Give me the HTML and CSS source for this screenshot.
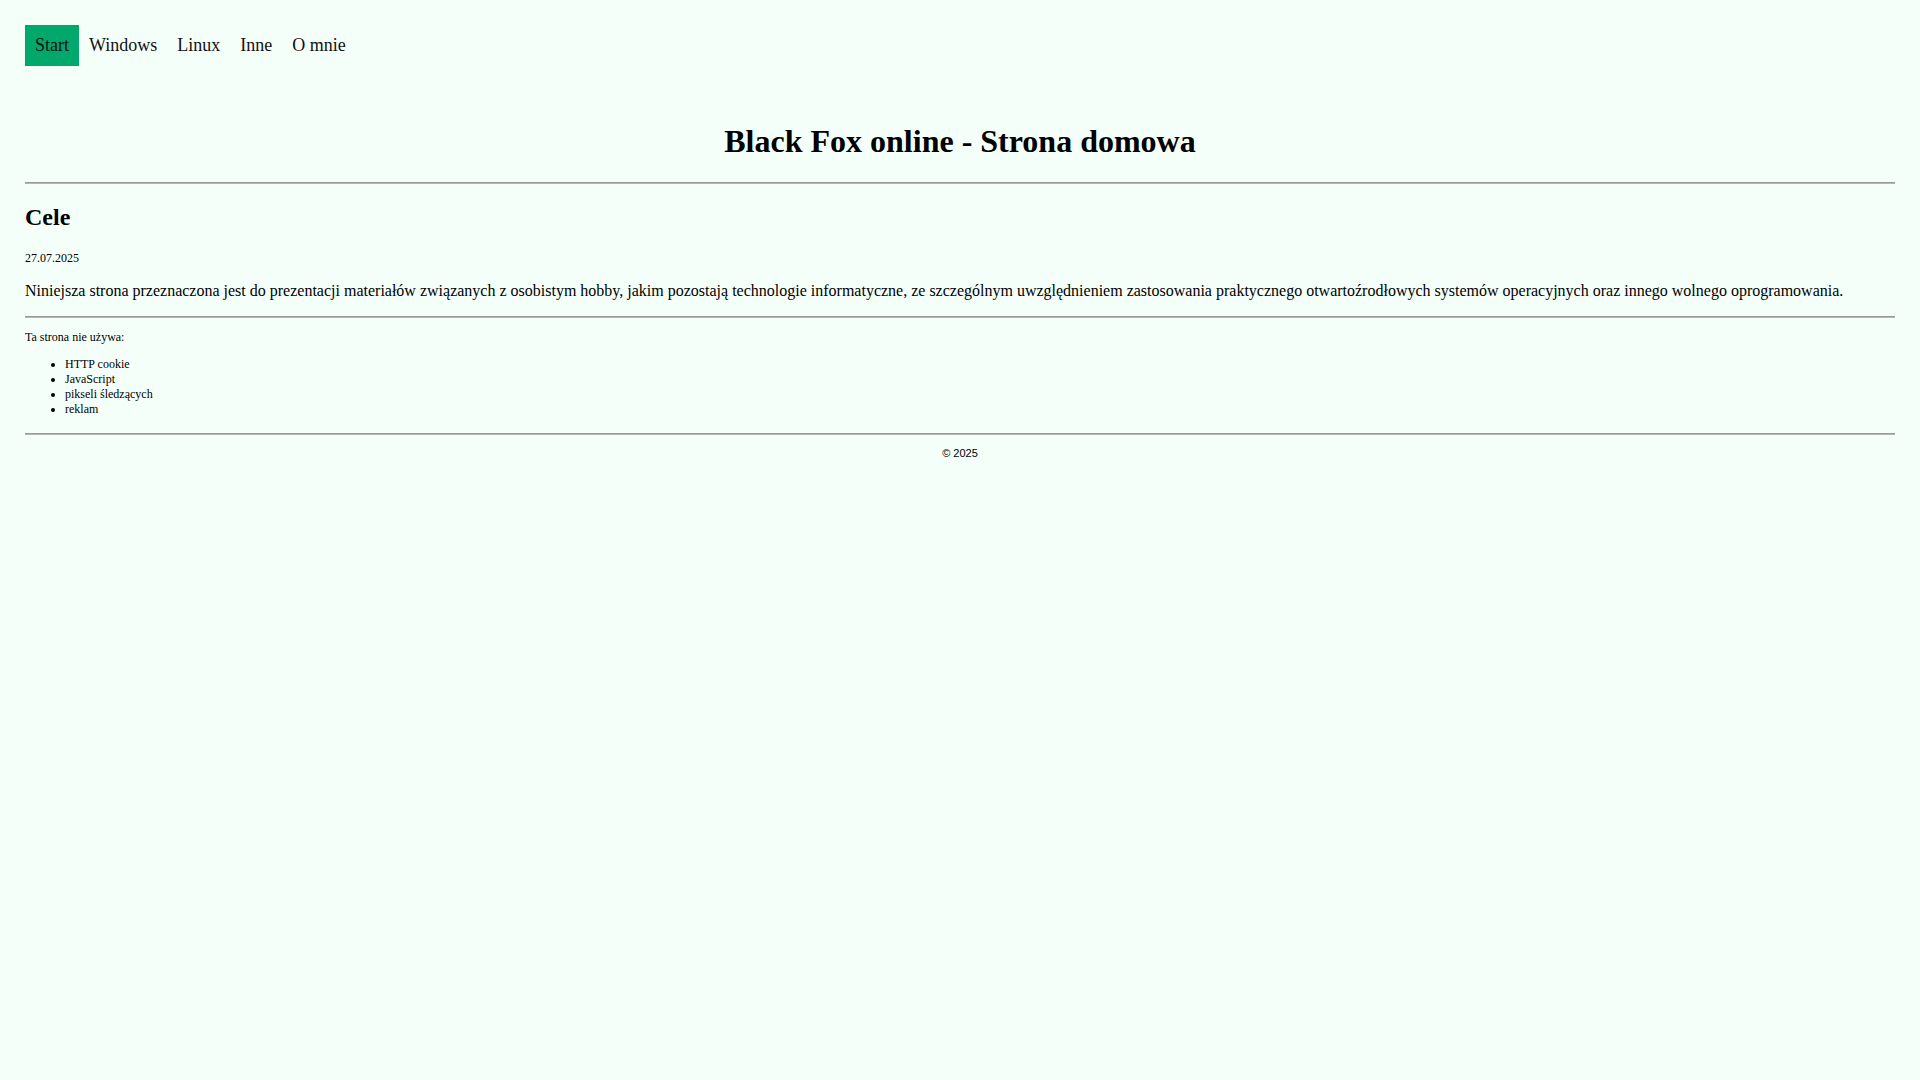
FILE: index.html
```html
<!DOCTYPE html>
<html lang="pl">
<head>
<meta charset="utf-8">
<title>Black Fox online - Strona domowa</title>
<link rel="stylesheet" href="styles.css">
</head>
<body>
<nav class="menu">
  <a class="menu-link active" href="#">Start</a>
  <a class="menu-link" href="#">Windows</a>
  <a class="menu-link" href="#">Linux</a>
  <a class="menu-link" href="#">Inne</a>
  <a class="menu-link" href="#">O mnie</a>
</nav>
<h1 class="title">Black Fox online - Strona domowa</h1>
<hr class="rule">
<main class="article">
  <h2 class="article-title">Cele</h2>
  <p class="date">27.07.2025</p>
  <p class="text">Niniejsza strona przeznaczona jest do prezentacji materiałów związanych z osobistym hobby, jakim pozostają technologie informatyczne, ze szczególnym uwzględnieniem zastosowania praktycznego otwartoźrodłowych systemów operacyjnych oraz innego wolnego oprogramowania.</p>
</main>
<hr class="rule">
<section class="info">
  <p class="info-text">Ta strona nie używa:</p>
  <ul class="info-list">
    <li>HTTP cookie</li>
    <li>JavaScript</li>
    <li>pikseli śledzących</li>
    <li>reklam</li>
  </ul>
</section>
<hr class="rule rule-foot">
<footer class="footer">
  <p class="copy">© 2025</p>
</footer>
</body>
</html>
```

FILE: styles.css
```css
html {
  background: #f5fffa;
}

body {
  margin: 25px;
  background: #f5fffa;
  color: #000;
  font-family: "Liberation Serif", "Times New Roman", serif;
}

.menu {
  display: flex;
  margin-bottom: 57px;
}

.menu-link {
  padding: 10px;
  font-size: 18px;
  color: #111;
  text-decoration: none;
}

.menu-link.active {
  background: #00a86b;
}

.title {
  text-align: center;
  font-size: 32px;
  margin: 21px 0 22px;
}

.rule {
  border: 0;
  border-top: 1px solid #9a9a9a;
  border-bottom: 1px solid #b4b4b4;
  margin: 8px 0;
}

.article-title {
  font-size: 24px;
  margin: 20px 0;
}

.date {
  font-size: 12px;
  margin: 12px 0;
}

.text {
  font-size: 16px;
  margin: 16px 0;
}

.info {
  font-size: 12px;
}

.info-text {
  margin: 12px 0;
}

.info-list {
  margin: 12px 0;
  padding-left: 40px;
}

.rule-foot {
  margin-top: 16px;
}

.footer {
  text-align: center;
}

.copy {
  font-family: "Liberation Sans", Arial, sans-serif;
  font-size: 11px;
  margin: 12px 0;
}
```
